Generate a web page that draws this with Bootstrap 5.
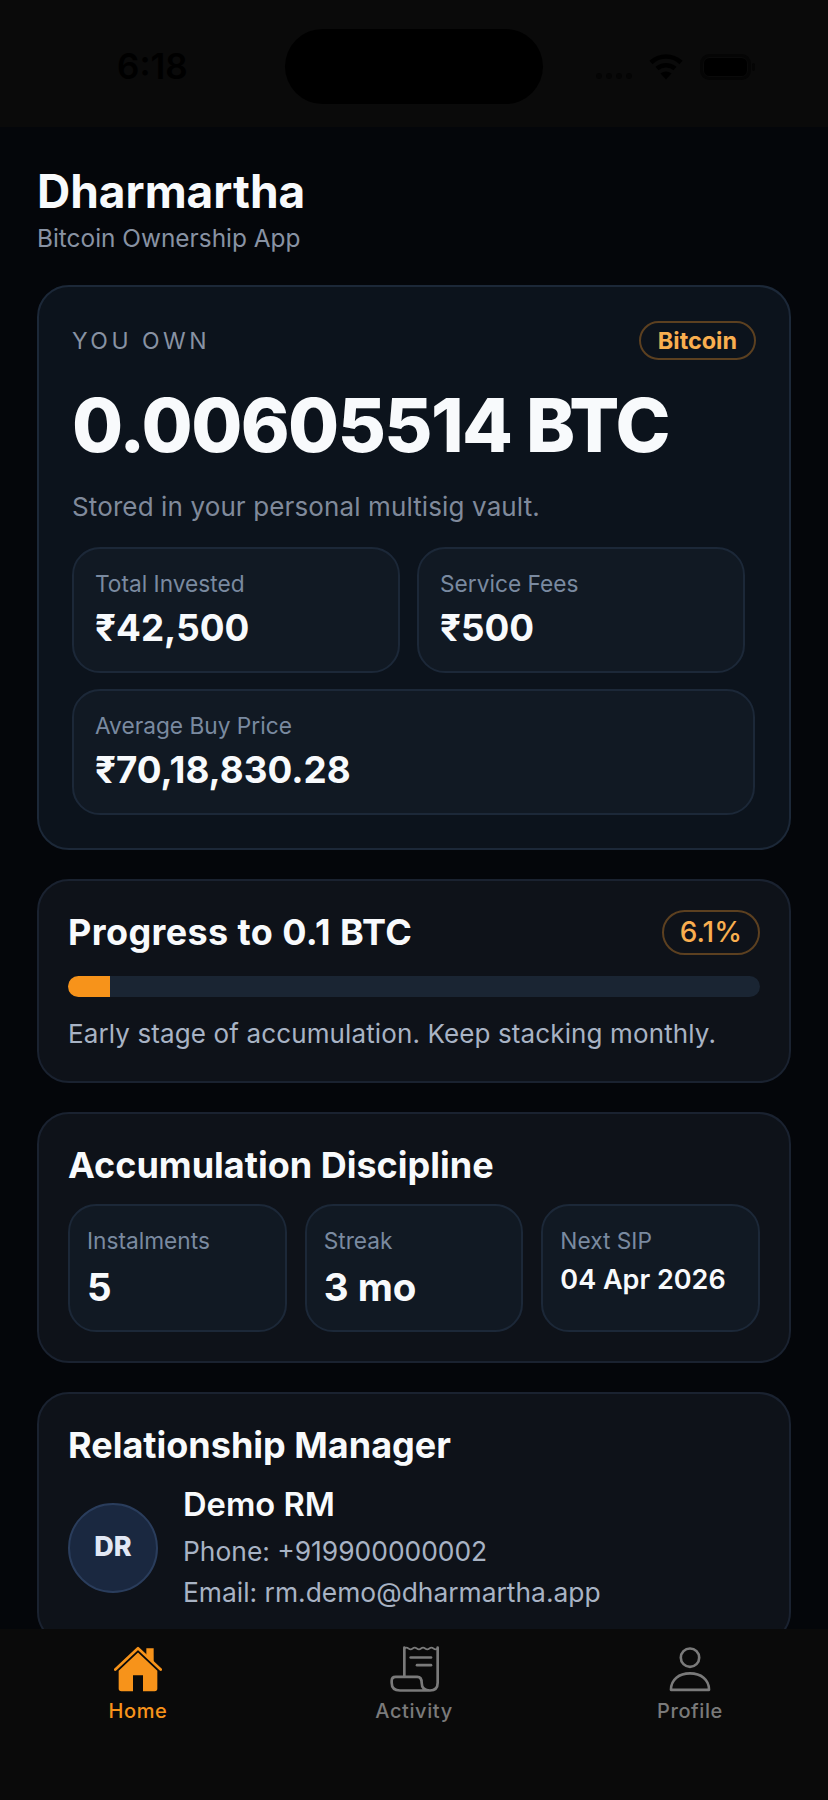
<!DOCTYPE html>
<html lang="en">
<head>
<meta charset="UTF-8">
<meta name="viewport" content="width=device-width, initial-scale=1.0">
<title>Dharmartha</title>
<link rel="stylesheet" href="https://cdn.jsdelivr.net/npm/bootstrap@5.3.3/dist/css/bootstrap.min.css">
<style>
body {
    font-family: Inter, "Liberation Sans", sans-serif;
    background-color: #04060a;
    color: #f8fafc;
}
.app-frame { height: 1800px; }

/* status bar */
.status-strip { height: 127px; background-color: #0a0a0a; padding: 6px 0 0 117px; flex: none; }
.status-time { width: 168px; font-size: 35px; font-weight: 600; color: #000; line-height: 1; }
.status-island { width: 258px; height: 75px; background-color: #000; border-radius: 38px; }
.status-icons { margin-left: 52px; }
.status-wifi { margin-left: 14px; }
.status-battery { margin-left: 17px; }

/* page */
.page-body { min-height: 0; padding: 39px 37px 0; background-color: #04060a; }
.app-title { font-size: 46px; line-height: 50px; font-weight: 700; margin: 0; }
.app-sub { font-size: 24.4px; line-height: 30px; color: #8892a3; margin: 7px 0 32px; }

.panel { background-color: #0e1219; border: 2px solid #1a2230; border-radius: 32px; padding: 28px 29px 29px; margin-bottom: 29px; color: #f8fafc; flex: none; }
.panel-hero { background-color: #0c131c; border-color: #1c2838; padding: 34px 33px 33px; }
.panel-title { font-size: 36px; line-height: 46px; font-weight: 700; margin: 0; }
.panel-title-wide { letter-spacing: 0.4px; }

.own-label { font-size: 23px; letter-spacing: 3.5px; color: #8892a3; padding-top: 2px; }
.tag-orange { border: 2px solid #5c4020; border-radius: 23px; color: #f9ae4f; background: transparent; }
.tag-coin { font-size: 23.4px; font-weight: 700; height: 39px; padding: 0 17px; line-height: 35px; }
.tag-pct { font-size: 28px; font-weight: 500; height: 45px; padding: 0 16px; line-height: 41px; }
.own-value { font-size: 74px; line-height: 80px; font-weight: 800; letter-spacing: -1.6px; margin-top: 25px; }
.own-note { font-size: 26px; line-height: 36px; letter-spacing: 0.12px; color: #808a9b; margin-top: 24px; margin-bottom: 22px; }

.tile { background-color: #111923; border: 2px solid #1c2838; border-radius: 28px; padding: 20px 21px 21px; }
.tile-half { width: 328px; }
.tile-full { width: 683px; }
.tile-row { gap: 16px 17px; }
.tile-label { font-size: 22.7px; line-height: 30px; color: #7a8aa0; }
.tile-value { font-size: 36.8px; line-height: 44px; font-weight: 700; margin-top: 7px; }

.bar-track { height: 21px; background-color: #1a2533; border-radius: 11px; margin-top: 21px; }
.bar-fill { background-color: #f7931a; }
.bar-note { font-size: 26px; line-height: 36px; letter-spacing: 0.12px; color: #a8b3c4; margin-top: 19px; }

.mini-row { gap: 18px; margin-top: 16px; }
.mini-tile { flex: 1 1 0; height: 128px; padding: 20px 17px; }
.mini-value { font-size: 38.5px; line-height: 46px; font-weight: 700; margin-top: 8px; }
.mini-date { font-size: 27px; line-height: 32px; font-weight: 600; margin-top: 8px; }

.rm-row { gap: 25px; margin-top: 16px; }
.rm-avatar { width: 90px; height: 90px; background-color: #1a2840; border: 2px solid #2a3d5c; font-size: 27px; font-weight: 800; color: #e2e8f5; margin-bottom: 2px; flex: none; }
.rm-name { font-size: 32.7px; line-height: 40px; font-weight: 600; margin-bottom: 7px; }
.rm-line { font-size: 26.4px; line-height: 41px; color: #a8b3c4; }

/* bottom tabs */
.tab-strip { height: 171px; background-color: #0a0a0a; flex: none; }
.tab-strip .nav-link { padding: 17px 0 0; color: #7a7a7a; font-size: 20px; line-height: 28px; font-weight: 500; letter-spacing: 0.6px; }
.tab-strip .nav-link.active { color: #f7931a; }
.tab-icon { height: 46px; display: block; margin: 0 auto 5px; }
</style>
</head>
<body>
<div class="app-frame d-flex flex-column overflow-hidden">

    <div class="status-strip d-flex align-items-center">
        <div class="status-time">6:18</div>
        <div class="status-island"></div>
        <div class="status-icons d-flex align-items-center">
            <svg width="40" height="26" viewBox="0 0 40 26"><g fill="#050505"><circle cx="4" cy="22" r="3"/><circle cx="14" cy="22" r="3"/><circle cx="24" cy="22" r="3"/><circle cx="34" cy="22" r="3"/></g></svg>
            <svg class="status-wifi" width="34" height="26" viewBox="0 0 34 26" fill="none" stroke="#000" stroke-width="4.500"><path d="M2 8.500C10.500 0.500 23.500 0.500 32 8.500"/><path d="M8 14.500C13 10 21 10 26 14.500"/><path d="M17 25.500L11.500 19.500C14.500 16.800 19.500 16.800 22.500 19.500Z" fill="#000" stroke="none"/></svg>
            <svg class="status-battery" width="56" height="26" viewBox="0 0 56 26"><rect x="1.500" y="1.500" width="48" height="23" rx="8" fill="none" stroke="#050505" stroke-width="3"/><rect x="4" y="4" width="43" height="18" rx="5.500" fill="#000"/><rect x="52" y="9" width="3" height="8" rx="1.500" fill="#050505"/></svg>
        </div>
    </div>

    <div class="page-body flex-grow-1 overflow-hidden d-flex flex-column">
        <h1 class="app-title">Dharmartha</h1>
        <p class="app-sub">Bitcoin Ownership App</p>

        <div class="card panel panel-hero">
            <div class="d-flex justify-content-between align-items-center">
                <span class="own-label">YOU OWN</span>
                <span class="tag-orange tag-coin">Bitcoin</span>
            </div>
            <div class="own-value">0.00605514 BTC</div>
            <div class="own-note">Stored in your personal multisig vault.</div>
            <div class="d-flex flex-wrap tile-row">
                <div class="tile tile-half">
                    <div class="tile-label">Total Invested</div>
                    <div class="tile-value">₹42,500</div>
                </div>
                <div class="tile tile-half">
                    <div class="tile-label">Service Fees</div>
                    <div class="tile-value">₹500</div>
                </div>
                <div class="tile tile-full">
                    <div class="tile-label">Average Buy Price</div>
                    <div class="tile-value">₹70,18,830.28</div>
                </div>
            </div>
        </div>

        <div class="card panel">
            <div class="d-flex justify-content-between align-items-center">
                <h2 class="panel-title panel-title-wide">Progress to 0.1 BTC</h2>
                <span class="tag-orange tag-pct">6.1%</span>
            </div>
            <div class="progress bar-track">
                <div class="progress-bar bar-fill" style="width: 6.1%"></div>
            </div>
            <div class="bar-note">Early stage of accumulation. Keep stacking monthly.</div>
        </div>

        <div class="card panel">
            <h2 class="panel-title">Accumulation Discipline</h2>
            <div class="d-flex mini-row">
                <div class="tile mini-tile">
                    <div class="tile-label">Instalments</div>
                    <div class="mini-value">5</div>
                </div>
                <div class="tile mini-tile">
                    <div class="tile-label">Streak</div>
                    <div class="mini-value">3 mo</div>
                </div>
                <div class="tile mini-tile">
                    <div class="tile-label">Next SIP</div>
                    <div class="mini-date">04 Apr 2026</div>
                </div>
            </div>
        </div>

        <div class="card panel">
            <h2 class="panel-title">Relationship Manager</h2>
            <div class="d-flex align-items-center rm-row">
                <div class="rm-avatar rounded-circle d-flex align-items-center justify-content-center">DR</div>
                <div>
                    <div class="rm-name">Demo RM</div>
                    <div class="rm-line">Phone: +919900000002</div>
                    <div class="rm-line">Email: rm.demo@dharmartha.app</div>
                </div>
            </div>
        </div>
    </div>

    <nav class="nav nav-justified tab-strip">
        <a class="nav-link active" href="#">
            <svg class="tab-icon" width="48" height="46" viewBox="103 78 144 137" fill="#f7931a">
                <path d="M107 148L175 84L243 148" fill="none" stroke="#f7931a" stroke-width="8" stroke-linecap="round" stroke-linejoin="round"/>
                <path d="M200 105V84H222V127Z"/>
                <path d="M175 97L233 152V205a8 8 0 0 1-8 8H190V165H160V213H125a8 8 0 0 1-8-8V152Z"/>
            </svg>
            Home
        </a>
        <a class="nav-link" href="#">
            <svg class="tab-icon" width="50" height="46" viewBox="87 78 150 137" fill="none" stroke="#7a7a7a" stroke-width="8" stroke-linecap="round" stroke-linejoin="round">
                <path d="M133 168V82"/>
                <path d="M233 82V188Q233 211 210 211H120Q95 211 95 188V182Q95 170 107 170H172Q185 170 185 188Q185 211 210 211"/>
                <path d="M133 85q6 -5 12.500 0t12.500 0t12.500 0t12.500 0t12.500 0t12.500 0t12.500 0t12.500 0" stroke-width="5"/>
                <path d="M152 112H213"/>
                <path d="M171 135H213"/>
            </svg>
            Activity
        </a>
        <a class="nav-link" href="#">
            <svg class="tab-icon" width="44" height="46" viewBox="924 78 134 137" fill="none" stroke="#7a7a7a" stroke-width="8" stroke-linecap="round" stroke-linejoin="round">
                <circle cx="991" cy="112" r="28"/>
                <path d="M933 210C933 178 958 160 991 160C1024 160 1049 178 1049 210Z"/>
            </svg>
            Profile
        </a>
    </nav>
</div>
<script src="https://cdn.jsdelivr.net/npm/bootstrap@5.3.3/dist/js/bootstrap.bundle.min.js"></script>
</body>
</html>
